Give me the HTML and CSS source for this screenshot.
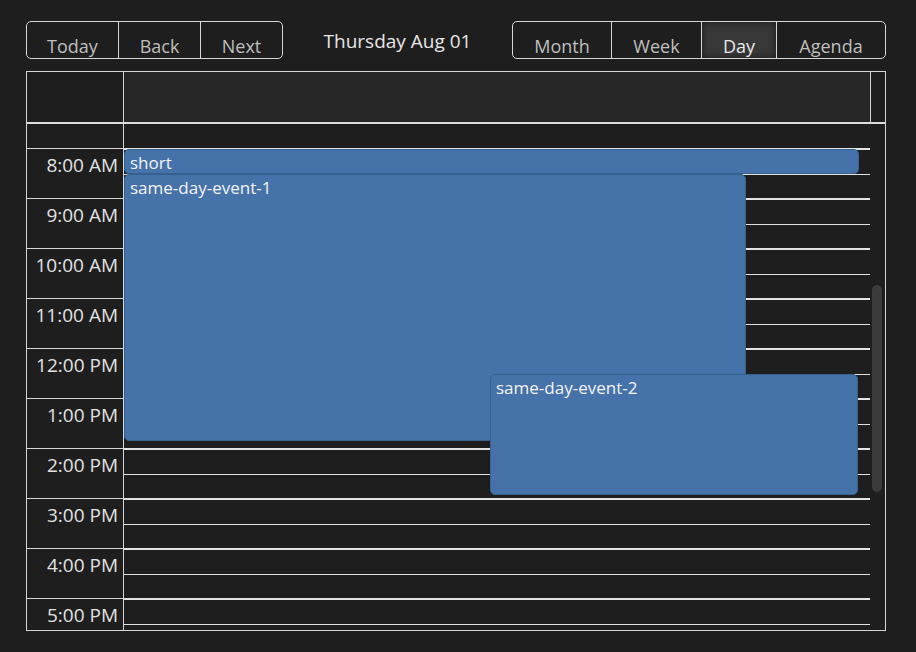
FILE: index.html
```html
<!DOCTYPE html>
<html lang="en">
<head>
<meta charset="utf-8">
<title>Calendar - Day</title>
<link rel="stylesheet" href="styles.css">
</head>
<body>
<div class="app">
  <div class="toolbar">
    <div class="btn-group">
      <button class="btn btn-today">Today</button>
      <button class="btn btn-back">Back</button>
      <button class="btn btn-next">Next</button>
    </div>
    <div class="toolbar-label">Thursday Aug 01</div>
    <div class="btn-group">
      <button class="btn btn-month">Month</button>
      <button class="btn btn-week">Week</button>
      <button class="btn btn-day active">Day</button>
      <button class="btn btn-agenda">Agenda</button>
    </div>
  </div>

  <div class="calendar">
    <div class="time-header">
      <div class="gutter-head"></div>
      <div class="day-head"></div>
      <div class="scroll-spacer"></div>
    </div>
    <div class="time-content">
      <div class="gutter">
        <div class="group partial"></div>
        <div class="group"><div class="label">8:00 AM</div></div>
        <div class="group"><div class="label">9:00 AM</div></div>
        <div class="group"><div class="label">10:00 AM</div></div>
        <div class="group"><div class="label">11:00 AM</div></div>
        <div class="group"><div class="label">12:00 PM</div></div>
        <div class="group"><div class="label">1:00 PM</div></div>
        <div class="group"><div class="label">2:00 PM</div></div>
        <div class="group"><div class="label">3:00 PM</div></div>
        <div class="group"><div class="label">4:00 PM</div></div>
        <div class="group"><div class="label">5:00 PM</div></div>
      </div>
      <div class="day-col">
        <div class="slot-group partial"><div class="slot"></div></div>
        <div class="slot-group"><div class="slot"></div><div class="slot"></div></div>
        <div class="slot-group"><div class="slot"></div><div class="slot"></div></div>
        <div class="slot-group"><div class="slot"></div><div class="slot"></div></div>
        <div class="slot-group"><div class="slot"></div><div class="slot"></div></div>
        <div class="slot-group"><div class="slot"></div><div class="slot"></div></div>
        <div class="slot-group"><div class="slot"></div><div class="slot"></div></div>
        <div class="slot-group"><div class="slot"></div><div class="slot"></div></div>
        <div class="slot-group"><div class="slot"></div><div class="slot"></div></div>
        <div class="slot-group"><div class="slot"></div><div class="slot"></div></div>
        <div class="slot-group"><div class="slot"></div><div class="slot"></div></div>
        <div class="events">
          <div class="event" style="top:25px;height:25px;left:0;width:735px;">short</div>
          <div class="event" style="top:50px;height:267px;left:0;width:622px;">same-day-event-1</div>
          <div class="event" style="top:250px;height:121px;left:366px;width:368px;">same-day-event-2</div>
        </div>
      </div>
      <div class="scrollbar"><div class="thumb"></div></div>
    </div>
  </div>
</div>
</body>
</html>
```

FILE: styles.css
```css
* { box-sizing: border-box; }

html, body {
  margin: 0;
  padding: 0;
  background: #1e1e1e;
}

body {
  font-family: "Open Sans", "Noto Sans", sans-serif;
  color: #e2e2e2;
}

.app {
  padding: 21px 0 0 26px;
  width: 886px;
}

/* Toolbar */
.toolbar {
  display: flex;
  align-items: center;
  height: 38px;
  margin-bottom: 12px;
}

.btn-group {
  display: flex;
  height: 38px;
}

.btn {
  height: 38px;
  margin: 0;
  padding: 11px 0 0;
  border: 1px solid #d6d6d6;
  background: transparent;
  color: #bfbfbf;
  font-family: "Open Sans", "Noto Sans", sans-serif;
  font-size: 18px;
  line-height: 24px;
  text-align: center;
  border-radius: 0;
}

.btn + .btn { margin-left: -1px; }
.btn:first-child { border-radius: 5px 0 0 5px; }
.btn:last-child { border-radius: 0 5px 5px 0; }

.btn-today { width: 93px; }
.btn-back { width: 83px; }
.btn-next { width: 83px; }
.btn-month { width: 100px; }
.btn-week { width: 91px; }
.btn-day { width: 76px; }
.btn-agenda { width: 110px; }

.btn.active {
  background: #383838;
  box-shadow: inset 0 0 7px rgba(0, 0, 0, 0.55);
  color: #e8e8e8;
}

.toolbar-label {
  flex: 1;
  text-align: center;
  font-size: 19px;
  color: #e6e6e6;
  padding-top: 2px;
}

/* Calendar */
.calendar {
  width: 860px;
  height: 560px;
  border: 1px solid #d6d6d6;
  display: flex;
  flex-direction: column;
}

.time-header {
  display: flex;
  height: 52px;
  flex: none;
  border-bottom: 2px solid #dcdcdc;
}

.gutter-head {
  width: 97px;
  border-right: 1px solid #d6d6d6;
}

.day-head {
  width: 747px;
  background: #262626;
  border-right: 1px solid #d6d6d6;
}

.scroll-spacer {
  flex: 1;
}

.time-content {
  display: flex;
  flex: 1;
  overflow: hidden;
}

.gutter {
  width: 97px;
  flex: none;
  border-right: 1px solid #d6d6d6;
}

.gutter .group {
  height: 50px;
  border-bottom: 1px solid #d6d6d6;
}

.gutter .group.partial { height: 25px; }

.label {
  padding: 3px 5px 0 0;
  text-align: right;
  font-size: 19px;
  color: #e2e2e2;
  white-space: nowrap;
}

.day-col {
  position: relative;
  width: 746px;
  flex: none;
}

.slot-group {
  height: 50px;
  border-bottom: 1px solid #e2e2e2;
  display: flex;
  flex-direction: column;
}

.slot-group.partial { height: 25px; }

.slot {
  flex: 1 0 0;
  border-top: 1px solid #e2e2e2;
}

.slot-group.partial .slot { border-top: none; }

.events {
  position: absolute;
  top: 0;
  left: 0;
  right: 10px;
  bottom: 0;
}

.event {
  position: absolute;
  background: #4572a9;
  border: 1px solid #36618f;
  border-radius: 5px;
  padding: 3px 5px 0;
  color: #f4f4f4;
  font-size: 17px;
  line-height: 1.2;
  overflow: hidden;
  white-space: nowrap;
}

.scrollbar {
  flex: 1;
  padding: 161px 3px 0 2px;
}

.thumb {
  height: 207px;
  border-radius: 5px;
  background: #3b3b3b;
}
```
